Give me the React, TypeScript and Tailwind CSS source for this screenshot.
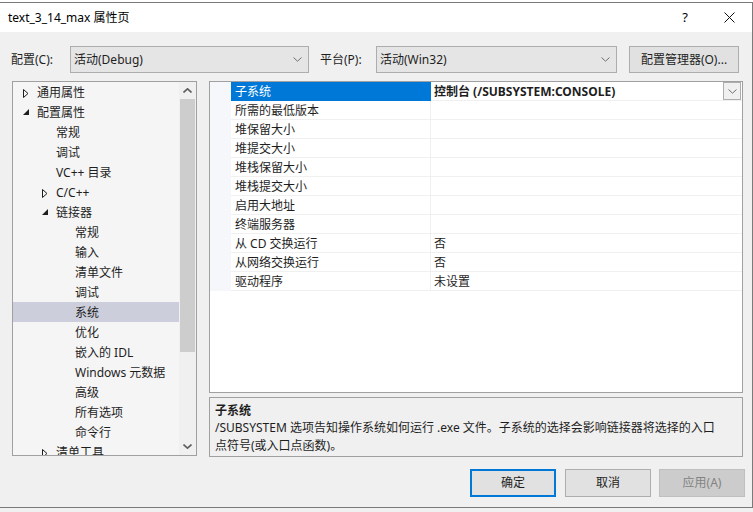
import React from 'react';

const treeItems: { label: string; level: number; marker?: 'closed' | 'open' }[] = [
  { label: '通用属性', level: 0, marker: 'closed' },
  { label: '配置属性', level: 0, marker: 'open' },
  { label: '常规', level: 1 },
  { label: '调试', level: 1 },
  { label: 'VC++ 目录', level: 1 },
  { label: 'C/C++', level: 1, marker: 'closed' },
  { label: '链接器', level: 1, marker: 'open' },
  { label: '常规', level: 2 },
  { label: '输入', level: 2 },
  { label: '清单文件', level: 2 },
  { label: '调试', level: 2 },
  { label: '系统', level: 2 },
  { label: '优化', level: 2 },
  { label: '嵌入的 IDL', level: 2 },
  { label: 'Windows 元数据', level: 2 },
  { label: '高级', level: 2 },
  { label: '所有选项', level: 2 },
  { label: '命令行', level: 2 },
  { label: '清单工具', level: 1, marker: 'closed' },
];

const props: [string, string][] = [
  ['子系统', '控制台 (/SUBSYSTEM:CONSOLE)'],
  ['所需的最低版本', ''],
  ['堆保留大小', ''],
  ['堆提交大小', ''],
  ['堆栈保留大小', ''],
  ['堆栈提交大小', ''],
  ['启用大地址', ''],
  ['终端服务器', ''],
  ['从 CD 交换运行', '否'],
  ['从网络交换运行', '否'],
  ['驱动程序', '未设置'],
];

const Chevron = ({ up = false, bold = false }: { up?: boolean; bold?: boolean }) => (
  <svg width="9" height="5" viewBox="0 0 9 5" className="block">
    <path
      d={up ? 'M0.5 4.5 L4.5 0.8 L8.5 4.5' : 'M0.5 0.5 L4.5 4.2 L8.5 0.5'}
      fill="none"
      stroke={bold ? '#606060' : '#707070'}
      strokeWidth={bold ? 1.6 : 1}
    />
  </svg>
);

const Marker = ({ kind }: { kind: 'closed' | 'open' }) =>
  kind === 'closed' ? (
    <svg width="6" height="9" viewBox="0 0 6 9" className="block">
      <path d="M0.5 0.5 L5 4.5 L0.5 8.5 Z" fill="none" stroke="#1e1e1e" strokeWidth="1" />
    </svg>
  ) : (
    <svg width="6" height="6" viewBox="0 0 6 6" className="block">
      <path d="M6 0 L6 6 L0 6 Z" fill="#1e1e1e" />
    </svg>
  );

const Select = ({ value, width }: { value: string; width: string }) => (
  <div
    className={`flex h-[27px] ${width} items-center justify-between border border-[#adadad] bg-[#e5e5e5] pl-[3px] pr-[6px]`}
  >
    <span>{value}</span>
    <Chevron />
  </div>
);

const App = () => {
  return (
    <div className="h-[512px] w-[753px] overflow-hidden bg-[#f0f0f0] font-['Segoe_UI','Noto_Sans','Noto_Sans_CJK_SC',sans-serif] text-[12px] leading-none text-[#1e1e1e]">
      <div className="h-[2px] bg-white" />
      <div className="flex h-[506px] flex-col border-t border-r border-b border-[#7a7a7a]">
        {/* title bar */}
        <div className="flex h-[29px] items-center bg-white pl-[8px]">
          <span className="text-[12px] text-black">text_3_14_max 属性页</span>
          <div className="ml-auto flex h-full items-center">
            <span className="flex w-[42px] justify-center text-[13px] text-black">?</span>
            <span className="flex w-[46px] justify-center">
              <svg width="11" height="11" viewBox="0 0 11 11">
                <path d="M0.5 0.5 L10.5 10.5 M10.5 0.5 L0.5 10.5" stroke="#111" strokeWidth="1" />
              </svg>
            </span>
          </div>
        </div>

        {/* config row */}
        <div className="mt-[14px] flex h-[27px] items-center">
          <span className="w-[70px] pl-[11px]">配置(C):</span>
          <Select value="活动(Debug)" width="w-[239px]" />
          <span className="w-[67px] pl-[11px]">平台(P):</span>
          <Select value="活动(Win32)" width="w-[241px]" />
          <div className="ml-[12px] flex h-[27px] w-[110px] items-center justify-center border border-[#adadad] bg-[#e1e1e1]">
            配置管理器(O)...
          </div>
        </div>

        {/* panels */}
        <div className="mt-[8px] flex">
          {/* tree */}
          <div className="ml-[12px] flex h-[375px] w-[185px] border border-[#a0a0a0] bg-[#f5f5f5]">
            <div className="flex-1 overflow-hidden">
              {treeItems.map((it, i) => (
                <div
                  key={i}
                  className={`relative flex h-[20px] items-center pt-[1px] ${i === 11 ? 'bg-[#cccedb]' : ''}`}
                  style={{ paddingLeft: 24 + it.level * 19 }}
                >
                  {it.marker && (
                    <span className="absolute top-[7px]" style={{ left: 10 + it.level * 19 }}>
                      <Marker kind={it.marker} />
                    </span>
                  )}
                  <span className="whitespace-nowrap">{it.label}</span>
                </div>
              ))}
            </div>
            <div className="flex w-[17px] flex-col bg-[#f0f0f0]">
              <div className="flex h-[17px] items-center justify-center">
                <Chevron up bold />
              </div>
              <div className="mx-[1px] h-[253px] bg-[#cdcdcd]" />
              <div className="flex-1" />
              <div className="flex h-[17px] items-center justify-center">
                <Chevron bold />
              </div>
            </div>
          </div>

          {/* right side */}
          <div className="ml-[12px] flex w-[534px] flex-col">
            <div className="h-[312px] border border-[#a0a0a0] bg-white">
              {props.map(([name, value], i) => (
                <div key={i} className="flex h-[19px]">
                  <div className="w-[21px] bg-[#f5f7fb]" />
                  <div
                    className={`flex w-[200px] items-center border-r border-b pl-[4px] pt-[1px] ${
                      i === 0
                        ? 'border-[#0078d7] bg-[#0078d7] text-white'
                        : 'border-[#f0f0f0]'
                    }`}
                  >
                    {name}
                  </div>
                  <div className="flex flex-1 items-center border-b border-[#f0f0f0] pl-[3px]">
                    <span className={`pt-[1px] ${i === 0 ? 'font-bold' : ''}`}>{value}</span>
                    {i === 0 && (
                      <div className="ml-auto mr-[1px] flex h-[18px] w-[18px] items-center justify-center border border-[#adadad] bg-[#f0f0f0]">
                        <Chevron />
                      </div>
                    )}
                  </div>
                </div>
              ))}
            </div>
            <div className="mt-[4px] h-[60px] border border-[#a0a0a0] bg-[#f0f0f0] pl-[5px] pt-[5px]">
              <div className="font-bold leading-[16px]">子系统</div>
              <div className="whitespace-nowrap leading-[18px]">
                /SUBSYSTEM 选项告知操作系统如何运行 .exe 文件。子系统的选择会影响链接器将选择的入口
              </div>
              <div className="whitespace-nowrap leading-[18px]">点符号(或入口点函数)。</div>
            </div>
          </div>
        </div>

        {/* buttons */}
        <div className="mt-[12px] flex h-[28px] pl-[470px]">
          <div className="flex h-[28px] w-[86px] items-center justify-center border-2 border-[#0078d7] bg-[#e1e1e1]">
            确定
          </div>
          <div className="ml-[9px] flex h-[28px] w-[86px] items-center justify-center border border-[#adadad] bg-[#e1e1e1]">
            取消
          </div>
          <div className="ml-[8px] flex h-[28px] w-[86px] items-center justify-center border border-[#bfbfbf] bg-[#cccccc] text-[#838383]">
            应用(A)
          </div>
        </div>
      </div>
    </div>
  );
};

export default App;
